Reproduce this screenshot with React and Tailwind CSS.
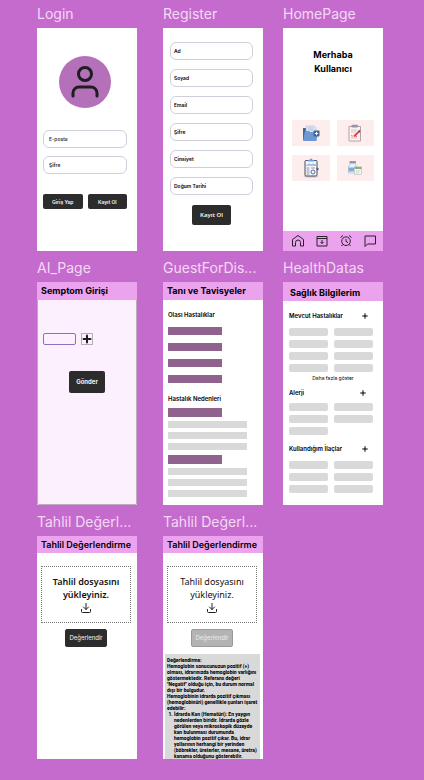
import React from "react";
import { Plus, Download } from "lucide-react";

const field =
  "block w-full h-[18px] rounded-md border border-[#cfcfdc] bg-white text-[5px] leading-[6px] text-[#1e1e1e] placeholder:text-[#1e1e1e] outline-none";
const dark =
  "flex items-center justify-center rounded-[2px] bg-[#2c2c2c] text-[#f5f5f5]";

function Frame({ name, className = "", board = "bg-white", children }) {
  return (
    <section className={"min-w-0 " + className}>
      <h2 className="h-7 whitespace-nowrap text-[14px] leading-[27px] font-normal text-[#f3d9f5]">
        {name}
      </h2>
      <div className={"flex h-[223px] flex-col overflow-hidden " + board}>{children}</div>
    </section>
  );
}

function Header({ children, className = "h-[18px] pl-1 font-bold" }) {
  return (
    <h3
      className={
        "flex shrink-0 items-center whitespace-nowrap bg-[#eba3ee] text-[9px] leading-[12px] text-black " +
        className
      }
    >
      {children}
    </h3>
  );
}

function Login() {
  return (
    <form className="flex flex-col pt-7 pr-[10px] pl-[6px]">
      <div className="ml-4 flex size-[52px] items-center justify-center rounded-full bg-[#b471b9]">
        <svg viewBox="0 0 28 32" className="h-8 w-7" fill="none" stroke="#1e1e1e" strokeWidth="3" strokeLinecap="round">
          <circle cx="14" cy="8" r="6.5" />
          <path d="M2 30v-3a6 6 0 0 1 6-6h12a6 6 0 0 1 6 6v3" />
        </svg>
      </div>
      <div className="mt-[22px] flex flex-col gap-2">
        <input aria-label="E-posta" placeholder="E-posta" className={field + " px-[5px] font-medium"} />
        <input aria-label="Şifre" type="password" placeholder="Şifre" className={field + " px-[5px] font-semibold"} />
      </div>
      <div className="mt-5 grid grid-cols-2 gap-[5px] text-[5px] leading-[6px] font-semibold">
        <button type="button" className={dark + " h-[15px]"}>Giriş Yap</button>
        <button type="button" className={dark + " h-[15px]"}>Kayıt Ol</button>
      </div>
    </form>
  );
}

function Register() {
  const fields = ["Ad", "Soyad", "Email", "Şifre", "Cinsiyet", "Doğum Tarihi"];
  return (
    <form className="flex flex-col items-center pt-[14px] pr-[10px] pl-[7px]">
      <div className="flex w-full flex-col gap-[9px]">
        {fields.map((f) => (
          <input
            key={f}
            aria-label={f}
            placeholder={f}
            className={field + " px-[3px] font-semibold placeholder:text-black"}
          />
        ))}
      </div>
      <button type="button" className={dark + " mt-[10px] h-5 w-[39px] font-['Noto_Sans',sans-serif] text-[6px] leading-[8px] font-semibold"}>
        Kayıt Ol
      </button>
    </form>
  );
}

function FolderIcon() {
  return (
    <svg viewBox="0 0 18 18" className="size-[18px]">
      <path d="M1 4h4l1 1v11H1z" fill="#41659b" />
      <path d="M4 2h8l2 2v10H4z" fill="#dbe3f0" stroke="#a9b7cd" strokeWidth=".5" />
      <path d="M6 4h5M6 6h6" stroke="#a9b7cd" strokeWidth=".6" />
      <path d="M3 7h4l1 1h8l-1.500 9H1z" fill="#6d98d2" />
      <rect x="11.500" y="6.500" width="6" height="6" rx="1" fill="#41659b" />
      <path d="M14.500 7.800v3.400M12.800 9.500h3.400" stroke="#fff" strokeWidth="1" />
    </svg>
  );
}

function ReportIcon() {
  return (
    <svg viewBox="0 0 18 18" className="size-[18px]">
      <rect x="2.500" y="2" width="12.500" height="15.500" rx="1" fill="#b99f9f" />
      <rect x="3.500" y="3" width="10.500" height="13.500" fill="#faf3f3" />
      <rect x="5.500" y=".8" width="6.500" height="2.600" rx="1" fill="#9894a8" />
      <path d="M5 6h6M5 8h5M5 12h2M5 14h6" stroke="#bcb3bd" strokeWidth=".7" />
      <path d="M5 11l2 1.500" stroke="#e08080" strokeWidth=".8" />
      <path d="M8 12.500l5-5" stroke="#dd4747" strokeWidth="1.800" />
      <path d="M12.500 8l1.500-1.500" stroke="#555d80" strokeWidth="1.800" />
      <path d="M8 11l3 1.500" stroke="#dd4747" strokeWidth="1" />
    </svg>
  );
}

function ChartIcon() {
  return (
    <svg viewBox="0 0 20 20" className="size-5">
      <ellipse cx="10" cy="18.700" rx="8" ry=".8" fill="#d4c3c8" />
      <rect x="4" y="2.500" width="12" height="15.500" rx="1" fill="#f7f8fc" stroke="#4a4a60" strokeWidth="1" />
      <path d="M6.500 3.500V2h2a1.500 1.500 0 0 1 3 0h2v1.500z" fill="#6fa0d8" />
      <path d="M6 8V6.500M8 8V5.500M10 8V6M12 8V5.500M14 8V6" stroke="#6fa0d8" strokeWidth="1.200" />
      <path d="M5.500 10h3M5.500 12h3M5.500 14h3M5.500 16h3M10 10h4" stroke="#77778f" strokeWidth=".8" />
      <circle cx="12" cy="14" r="2" fill="none" stroke="#4f6ea5" strokeWidth="1" />
      <circle cx="16.500" cy="11" r="1.200" fill="#565a80" />
    </svg>
  );
}

function MedicineIcon() {
  return (
    <svg viewBox="0 0 16 16" className="size-4">
      <rect x="2.500" y="1" width="6.500" height="2.500" rx=".5" fill="#8b9cbb" />
      <path d="M3 3.500h5.500v1.500l1 1V13H1.500V6l1.500-1z" fill="#e8f0fa" stroke="#a8b6cb" strokeWidth=".6" />
      <rect x="1.500" y="7.500" width="5.500" height="4" fill="#7fabdc" />
      <rect x="7.500" y="7" width="7" height="7.500" fill="#f5f5ec" stroke="#a8b0ac" strokeWidth=".5" />
      <rect x="7.500" y="6.800" width="7" height="2.200" fill="#86b08b" />
      <path d="M9 11h4M9 12.800h3" stroke="#b8bcb4" strokeWidth=".6" />
    </svg>
  );
}

const nav = [
  [
    "Ana sayfa",
    <path key="a" d="M1.500 5.500L7 1.500l5.500 4v6.500h-3V8.500a2.500 2.500 0 0 0-5 0V12h-3z" />,
  ],
  [
    "Arşiv",
    <g key="b">
      <path d="M2 2.500h10V12H2zM2 4.500h10" />
      <path d="M7 6v3.500M5.500 8L7 9.500 8.500 8" />
    </g>,
  ],
  [
    "Alarm",
    <g key="c">
      <circle cx="7" cy="7.200" r="4.300" />
      <path d="M7 5v2.500l2 1M1.500 3.500L4 1.500M12.500 3.500L10 1.500M3.700 10.500L2.500 12M10.300 10.500l1.200 1.500" />
    </g>,
  ],
  ["Mesajlar", <path key="d" d="M2 2h10.500v8H4.500L2 12.500z" />],
];

function Home() {
  return (
    <>
      <h3 className="pt-5 text-center text-[9px] leading-[14px] font-bold text-black">
        Merhaba
        <br />
        Kullanıcı
      </h3>
      <div className="mt-11 grid grid-cols-2 gap-x-[7px] gap-y-[9px] pr-[9px] pl-[9px]">
        {[FolderIcon, ReportIcon, ChartIcon, MedicineIcon].map((Icon, i) => (
          <div key={i} className="flex h-[26px] items-center justify-center bg-[#fdeded]">
            <Icon />
          </div>
        ))}
      </div>
      <nav className="mt-auto flex h-5 items-center justify-between bg-[#eba3ee] pr-[6px] pl-2">
        {nav.map(([label, icon]) => (
          <button key={label} type="button" aria-label={label}>
            <svg viewBox="0 0 14 14" className="size-[14px]" fill="none" stroke="#2b1e2d" strokeWidth="1" strokeLinejoin="round">
              {icon}
            </svg>
          </button>
        ))}
      </nav>
    </>
  );
}

function AiPage() {
  return (
    <>
      <Header>Semptom Girişi</Header>
      <form className="flex flex-1 flex-col rounded-b-[2px] border border-t-0 border-[#b9adbb] pt-[33px]">
        <div className="flex gap-[5px] pl-[5px]">
          <input aria-label="Semptom" className="h-3 w-[33px] rounded-[2px] border border-[#8a72bf] bg-transparent outline-none" />
          <button type="button" aria-label="Ekle" className="flex h-3 w-3 items-center justify-center border border-[#b7adb9]">
            <Plus className="size-3 shrink-0 text-[#1e1e1e]" strokeWidth={4} />
          </button>
        </div>
        <button type="button" className={dark + " mt-[26px] ml-[31px] h-[22px] w-9 text-[6px] leading-[8px] font-bold"}>
          Gönder
        </button>
      </form>
    </>
  );
}

function Disease() {
  return (
    <>
      <Header>Tanı ve Tavisyeler</Header>
      <div className="pt-[11px] pl-[5px] text-[6px] leading-[8px] font-semibold text-black">
        <h4>Olası Hastalıklar</h4>
        <div className="mt-2 flex flex-col gap-2">
          {[0, 1, 2, 3].map((i) => (
            <div key={i} className="h-2 w-[54px] bg-[#90638f]" />
          ))}
        </div>
        <h4 className="mt-3">Hastalık Nedenleri</h4>
        <div className="mt-[5px] flex flex-col gap-[5px]">
          {[0, 1].map((i) => (
            <div key={i} className="flex flex-col gap-1">
              <div className="h-[9px] w-[54px] bg-[#90638f]" />
              {[0, 1, 2].map((j) => (
                <div key={j} className="h-[7px] w-[79px] bg-[#d9d9d9]" />
              ))}
            </div>
          ))}
        </div>
      </div>
    </>
  );
}

function Group({ title, count, className = "", head = "pr-1", gap = "mt-2" }) {
  return (
    <div className={className}>
      <div className={"flex h-2 items-center justify-between " + head}>
        <h4 className="whitespace-nowrap text-[6px] leading-[8px] font-semibold text-black">{title}</h4>
        <button type="button" aria-label={title + " ekle"}>
          <Plus className="size-2 text-black" strokeWidth={3} />
        </button>
      </div>
      <div className={"grid grid-cols-2 gap-x-[6px] gap-y-1 " + gap}>
        {Array.from({ length: count }, (_, i) => (
          <div key={i} className="h-2 rounded-[2px] bg-[#d9d9d9]" />
        ))}
      </div>
    </div>
  );
}

function Health() {
  return (
    <>
      <Header className="h-[19px] pt-[2px] pl-[7px] font-bold">Sağlık Bilgilerim</Header>
      <div className="pt-[11px] pr-[10px] pl-[6px]">
        <Group title="Mevcut Hastalıklar" count={8} />
        <button type="button" className="mt-[3px] block w-full pl-1 text-center text-[5px] leading-[6px] text-black">
          Daha fazla göster
        </button>
        <Group title="Alerji" count={5} className="mt-2" head="pr-[6px]" gap="mt-[6px]" />
        <Group title="Kullandığım İlaçlar" count={6} className="mt-[10px]" />
      </div>
    </>
  );
}

function Upload({ done }) {
  return (
    <>
      <Header className="h-[17px] pl-1 font-semibold">Tahlil Değerlendirme</Header>
      <div className="flex shrink-0 flex-col items-center pt-[13px] pr-[6px] pl-1">
        <label
          className={
            "flex h-[57px] w-full flex-col items-center border border-dotted border-[#777] pt-2 text-center font-['Noto_Sans',sans-serif] text-[9px] leading-[13px] text-[#111] " +
            (done ? "font-normal" : "font-semibold")
          }
        >
          Tahlil dosyasını
          <br />
          yükleyiniz.
          <input type="file" className="sr-only" />
          <Download className="mt-px size-3 text-[#1e1e1e]" strokeWidth={2} />
        </label>
        <button
          type="button"
          disabled={done}
          className={
            "mt-[6px] flex h-[18px] w-[42px] items-center justify-center rounded-[2px] border text-[6px] leading-[8px] " +
            (done
              ? "border-[#999] bg-[#b3b3b3] text-[#ececec]"
              : "border-[#2c2c2c] bg-[#2c2c2c] text-[#f5f5f5]")
          }
        >
          Değerlendir
        </button>
      </div>
      {done && (
        <div className="mt-[7px] mr-[3px] ml-[2px] flex-1 overflow-hidden bg-[#d9d9d9] pt-[3px] pl-[2px] font-['Roboto',sans-serif] text-[5px] leading-[6px] font-extrabold whitespace-nowrap text-black">
          <p>Değerlendirme:</p>
          <p>
            Hemoglobin sonucunuzun pozitif (+)
            <br />
            olması, idrarınızda hemoglobin varlığını
            <br />
            göstermektedir. Referans değeri
            <br />
            "Negatif" olduğu için, bu durum normal
            <br />
            dışı bir bulgudur.
          </p>
          <p>
            Hemoglobinin idrarda pozitif çıkması
            <br />
            (hemoglobinüri) genellikle şunları işaret
            <br />
            edebilir:
          </p>
          <ol className="list-decimal pl-[7px]">
            <li>
              İdrarda Kan (Hematüri): En yaygın
              <br />
              nedenlerden biridir. İdrarda gözle
              <br />
              görülen veya mikroskopik düzeyde
              <br />
              kan bulunması durumunda
              <br />
              hemoglobin pozitif çıkar. Bu, idrar
              <br />
              yollarının herhangi bir yerinden
              <br />
              (böbrekler, üreterler, mesane, üretra)
              <br />
              kanama olduğunu gösterebilir.
            </li>
          </ol>
        </div>
      )}
    </>
  );
}

export default function App() {
  return (
    <main
      lang="tr"
      className="grid min-h-screen grid-cols-[126fr_120fr_100fr] content-start gap-y-[3px] bg-[#c66bce] pr-[41px] pb-5 pl-[37px] font-['Inter',sans-serif]"
    >
      <Frame name="Login" className="pr-[26px]"><Login /></Frame>
      <Frame name="Register" className="pr-5"><Register /></Frame>
      <Frame name="HomePage"><Home /></Frame>
      <Frame name="AI_Page" className="pr-[26px]" board="bg-[#fdf0fe]"><AiPage /></Frame>
      <Frame name="GuestForDis..." className="pr-5"><Disease /></Frame>
      <Frame name="HealthDatas"><Health /></Frame>
      <Frame name="Tahlil Değerl..." className="pr-[26px]"><Upload done={false} /></Frame>
      <Frame name="Tahlil Değerl..." className="pr-5"><Upload done /></Frame>
    </main>
  );
}
